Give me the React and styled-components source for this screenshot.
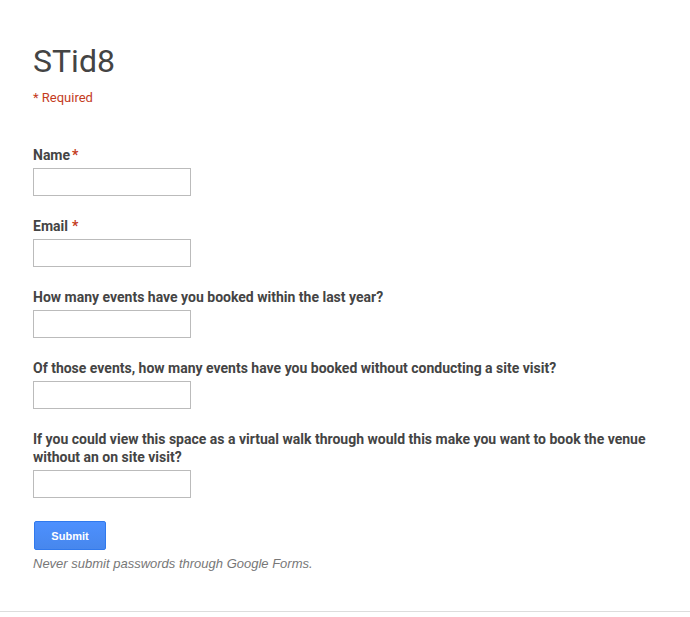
import React from "react";
import styled, { createGlobalStyle } from "styled-components";

const GlobalStyle = createGlobalStyle`
  html, body {
    margin: 0;
    padding: 0;
    background: #fff;
  }
  body {
    font-family: Roboto, "Liberation Sans", Arial, sans-serif;
    color: #444;
  }
`;

const Page = styled.div`
  width: 690px;
  min-height: 617px;
  display: flex;
  flex-direction: column;
`;

const Content = styled.form`
  display: flex;
  flex-direction: column;
  padding: 39px 33px 0 33px;
`;

const Title = styled.h1`
  margin: 0;
  font-size: 32px;
  font-weight: 400;
  line-height: 44px;
  color: #444;
`;

const RequiredNote = styled.div`
  margin-top: 7px;
  font-size: 13px;
  line-height: 16px;
  color: #c43b1d;
`;

const Questions = styled.div`
  display: flex;
  flex-direction: column;
  gap: 21px;
  margin-top: 40px;
`;

const Question = styled.div`
  display: flex;
  flex-direction: column;
`;

const Label = styled.label`
  font-size: 14px;
  font-weight: 700;
  line-height: 18px;
  color: #444;
  margin-bottom: 4px;
  max-width: 620px;
`;

const Star = styled.span`
  color: #c43b1d;
  margin-left: ${(p) => p.gap}px;
`;

const TextBox = styled.input`
  box-sizing: border-box;
  width: 158px;
  height: 28px;
  border: 1px solid #bbb;
  margin: 0;
  padding: 0 4px;
  font-size: 13px;
  outline: none;
`;

const Submit = styled.button`
  margin-top: 23px;
  margin-left: 1px;
  align-self: flex-start;
  width: 72px;
  height: 29px;
  border: 1px solid #3079ed;
  border-radius: 2px;
  background: linear-gradient(#4d90fe, #4787ed);
  color: #fff;
  font-family: "Liberation Sans", Arial, sans-serif;
  font-size: 11px;
  font-weight: 700;
  padding: 0;
  cursor: pointer;
`;

const Disclaimer = styled.div`
  margin-top: 6px;
  font-family: "Liberation Sans", Arial, sans-serif;
  font-size: 13px;
  font-style: italic;
  color: #777;
  line-height: 16px;
`;

const Footer = styled.div`
  margin-top: 39px;
  border-top: 1px solid #ddd;
`;

const questions = [
  { label: "Name", required: true, gap: 2 },
  { label: "Email", required: true, gap: 4 },
  { label: "How many events have you booked within the last year?" },
  { label: "Of those events, how many events have you booked without conducting a site visit?" },
  {
    label:
      "If you could view this space as a virtual walk through would this make you want to book the venue without an on site visit?",
  },
];

export default function App() {
  return (
    <Page>
      <GlobalStyle />
      <Content onSubmit={(e) => e.preventDefault()}>
        <Title>STid8</Title>
        <RequiredNote>* Required</RequiredNote>
        <Questions>
          {questions.map((q, i) => (
            <Question key={i}>
              <Label htmlFor={`q${i}`}>
                {q.label}
                {q.required && <Star gap={q.gap}>*</Star>}
              </Label>
              <TextBox id={`q${i}`} type="text" />
            </Question>
          ))}
        </Questions>
        <Submit type="submit">Submit</Submit>
        <Disclaimer>Never submit passwords through Google Forms.</Disclaimer>
      </Content>
      <Footer />
    </Page>
  );
}
